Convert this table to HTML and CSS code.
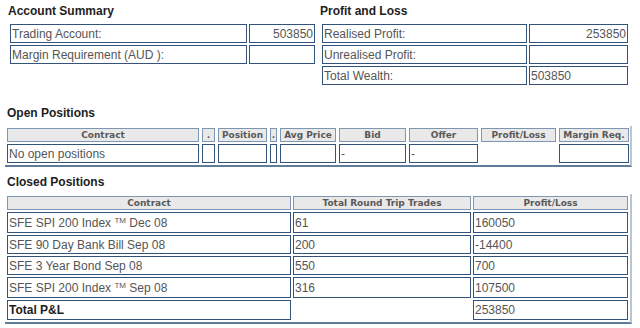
FILE: index.html
```html
<!DOCTYPE html>
<html lang="en">
<head>
  <meta charset="UTF-8">
  <title>Account Summary</title>
  <link rel="stylesheet" href="styles.css">
</head>
<body>
  <div class="page">
    <div class="summary">
      <div class="panel panel-left">
        <h3>Account Summary</h3>
        <div class="grid account">
          <div class="cell">Trading Account:</div>
          <div class="cell num">503850</div>
          <div class="cell">Margin Requirement (AUD ):</div>
          <div class="cell num"></div>
        </div>
      </div>
      <div class="panel">
        <h3>Profit and Loss</h3>
        <div class="grid pnl">
          <div class="cell">Realised Profit:</div>
          <div class="cell num">253850</div>
          <div class="cell">Unrealised Profit:</div>
          <div class="cell num"></div>
          <div class="cell">Total Wealth:</div>
          <div class="cell">503850</div>
        </div>
      </div>
    </div>

    <h3 class="open-title">Open Positions</h3>
    <div class="grid positions open">
      <div class="cell head">Contract</div>
      <div class="cell head">.</div>
      <div class="cell head">Position</div>
      <div class="cell head">.</div>
      <div class="cell head">Avg Price</div>
      <div class="cell head">Bid</div>
      <div class="cell head">Offer</div>
      <div class="cell head">Profit/Loss</div>
      <div class="cell head">Margin Req.</div>

      <div class="cell">No open positions</div>
      <div class="cell"></div>
      <div class="cell"></div>
      <div class="cell"></div>
      <div class="cell"></div>
      <div class="cell">-</div>
      <div class="cell">-</div>
      <div class="blank"></div>
      <div class="cell"></div>
    </div>

    <h3 class="closed-title">Closed Positions</h3>
    <div class="grid positions closed">
      <div class="cell head">Contract</div>
      <div class="cell head">Total Round Trip Trades</div>
      <div class="cell head">Profit/Loss</div>

      <div class="cell"><span>SFE SPI 200 Index <sup>TM</sup> Dec 08</span></div>
      <div class="cell">61</div>
      <div class="cell">160050</div>

      <div class="cell">SFE 90 Day Bank Bill Sep 08</div>
      <div class="cell">200</div>
      <div class="cell">-14400</div>

      <div class="cell">SFE 3 Year Bond Sep 08</div>
      <div class="cell">550</div>
      <div class="cell">700</div>

      <div class="cell"><span>SFE SPI 200 Index <sup>TM</sup> Sep 08</span></div>
      <div class="cell">316</div>
      <div class="cell">107500</div>

      <div class="cell total">Total P&amp;L</div>
      <div class="blank"></div>
      <div class="cell">253850</div>
    </div>
  </div>
</body>
</html>
```

FILE: styles.css
```css
body {
  margin: 0;
  background: #fff;
  font-family: "Liberation Sans", Arial, sans-serif;
  font-size: 12px;
  color: #555;
}
.page {
  padding: 4px 0 0 5px;
  width: 627px;
}
h3 {
  margin: 0;
  font-size: 12px;
  line-height: 14px;
  color: #1e1e1e;
}
.summary {
  display: flex;
  align-items: flex-start;
  margin-left: 3px;
}
.panel {
  width: 308px;
}
.panel-left {
  width: 312px;
}
.panel h3 {
  margin-bottom: 4px;
}
.grid {
  display: grid;
  gap: 2px;
  padding: 2px;
}
.account {
  grid-template-columns: 237px 66px;
  grid-auto-rows: 19px;
}
.pnl {
  grid-template-columns: 205px 99px;
  grid-auto-rows: 19px;
}
.cell {
  border: 1px solid #34537a;
  padding: 0 1px;
  display: flex;
  align-items: center;
  white-space: nowrap;
  overflow: hidden;
}
.num {
  justify-content: flex-end;
}
.head {
  justify-content: center;
  background: #e9e9e9;
  border-color: #7d97b3;
  font-family: "DejaVu Sans", Verdana, sans-serif;
  font-size: 9px;
  font-weight: bold;
  color: #595959;
}
.total {
  font-weight: bold;
  color: #1e1e1e;
}
sup {
  font-size: 8px;
  line-height: 0;
  vertical-align: 4px;
}
.positions {
  border-right: 2px solid #b9c5d1;
  border-bottom: 2px solid #5f7c99;
}
.open-title {
  margin: 19px 0 6px 2px;
}
.open {
  grid-template-columns: 192px 13px 49px 7px 56px 67px 69px 75px 70px;
  grid-template-rows: 14px 19px;
  column-gap: 3px;
}
.closed-title {
  margin: 8px 0 5px 2px;
}
.closed {
  grid-template-columns: 284px 178px 155px;
  grid-template-rows: 14px 21px 19px 19px 21px 20px;
}
```
